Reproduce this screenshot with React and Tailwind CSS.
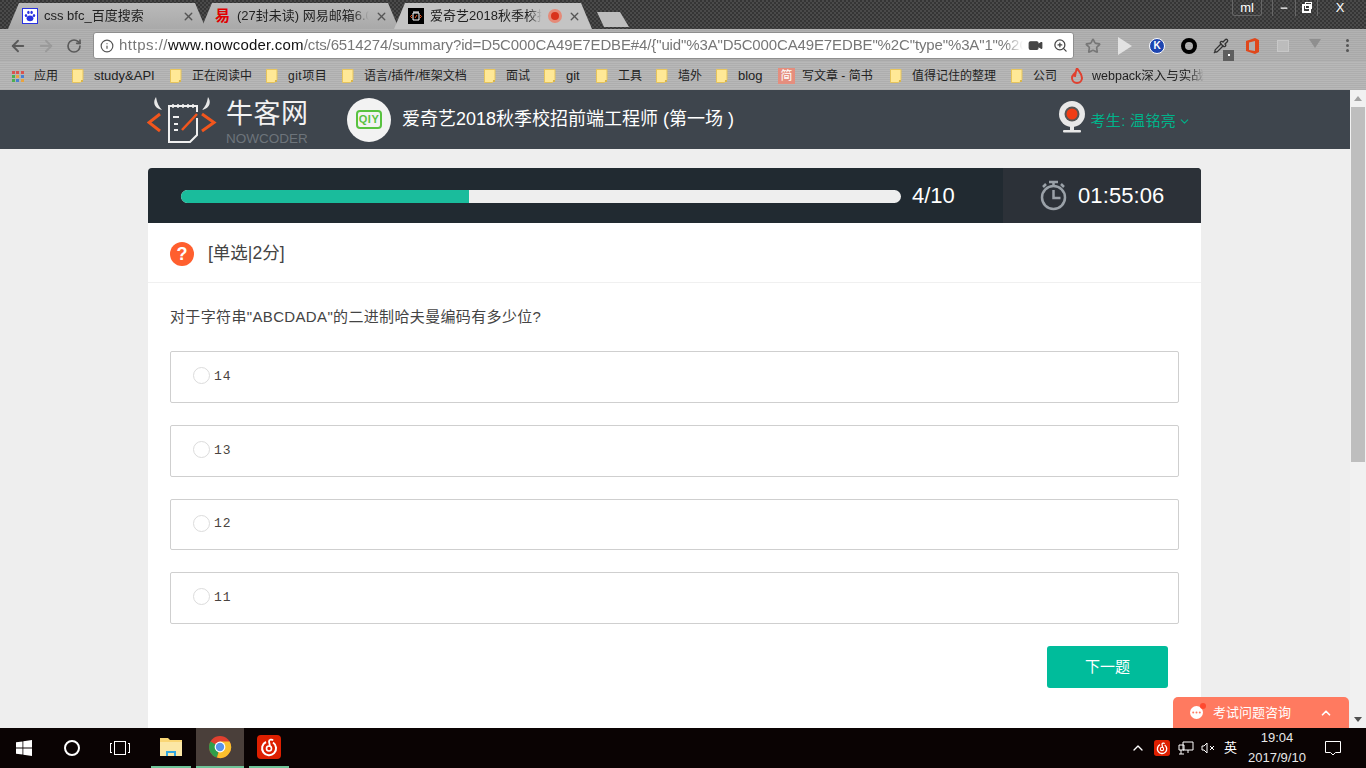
import React from "react";
import { ArrowLeft, ArrowRight, RotateCw, Info, Star, Video, ZoomIn, X, ChevronDown, ChevronUp, Pipette, Minus } from "lucide-react";

const FONT = "font-['Liberation_Sans','Noto_Sans_CJK_SC',sans-serif]";

function Folder() {
  return (
    <svg width="12" height="14" viewBox="0 0 12 14" className="shrink-0">
      <path d="M.5.5h10.500v10l-2.500 3H.5z" fill="#ffe896" stroke="#e6c45c" />
      <path d="M9 11h2v2H9z" fill="#d9b64a" />
    </svg>
  );
}

function AppsIcon() {
  const c = ["#d9534f", "#d9534f", "#d9534f", "#4caf50", "#e8a33d", "#4a7fd0", "#4caf50", "#4a7fd0", "#e8a33d"];
  return (
    <div className="grid grid-cols-3 gap-[1px] w-[12px] shrink-0">
      {c.map((k, i) => (
        <svg key={i} width="3" height="3" className="block"><rect width="3" height="3" fill={k} /></svg>
      ))}
    </div>
  );
}

function Bookmark({ icon, label, w }) {
  return (
    <div className="flex items-center gap-[10px] shrink-0">
      {icon || <Folder />}
      <span className={"text-[#222] whitespace-nowrap " + w}>{label}</span>
    </div>
  );
}

function Tab({ icon, title, active, extra }) {
  return (
    <div
      className={
        "relative -mr-[5px] h-[26px] w-[198px] shrink-0 flex items-center pl-[14px] pr-[11px] gap-[6px] [clip-path:polygon(0_100%,11px_0,calc(100%-11px)_0,100%_100%)] " +
        (active ? "bg-[#c4c4c4]" : "bg-[linear-gradient(180deg,#bababa,#a9a9a9)]")
      }
    >
      <div className="w-[16px] h-[16px] shrink-0">{icon}</div>
      <span className="flex-1 min-w-0 overflow-hidden whitespace-nowrap text-[13px] text-[#222] [mask-image:linear-gradient(90deg,#000_88%,transparent)]">{title}</span>
      {extra}
      <X size={13} strokeWidth={2.5} className="text-[#555] shrink-0" />
    </div>
  );
}

function Logo() {
  return (
    <svg width="70" height="48" viewBox="0 0 70 48" className="shrink-0">
      <path d="M9 1c-3 4-3 11 6 13-3-3-5-7-6-13z" fill="#e8e8e8" />
      <path d="M61 1c3 4 3 11-6 13 3-3 5-7 6-13z" fill="#e8e8e8" />
      <path d="M13 18 2 26.500 13 35" fill="none" stroke="#f2561d" strokeWidth="3" />
      <path d="M55 18l12 8.500L55 35" fill="none" stroke="#f2561d" strokeWidth="3" />
      <path d="M50 22v17l-7 7H22V10h28v6" fill="none" stroke="#f0f0f0" strokeWidth="2" />
      <path d="M26 8v4M31 8v4M36 8v4M41 8v4M46 8v4" stroke="#f0f0f0" strokeWidth="1.5" />
      <path d="M26 21h6M27 28h4M27 34h4" stroke="#f0f0f0" strokeWidth="2" />
      <path d="M35 34 50 18" stroke="#f2561d" strokeWidth="2.5" />
    </svg>
  );
}

function Option({ n, h }) {
  return (
    <div className={"border border-[#cfcfcf] rounded-[2px] flex items-center pl-[22px] pb-[3px] gap-[4px] " + h}>
      <span className="w-[17px] h-[17px] rounded-full border border-[#dcdcdc]" />
      <span className="font-['Liberation_Mono',monospace] text-[13px] tracking-[1px] text-[#4a4440] pt-[2px]">{n}</span>
    </div>
  );
}

function ChromeIcon() {
  return (
    <svg width="24" height="24" viewBox="0 0 24 24">
      <circle cx="12" cy="12" r="11" fill="#e0402f" />
      <path d="M12 12 2.500 6.500A11 11 0 0 0 9 22.600z" fill="#2f9e4a" />
      <path d="M12 12 9 22.600A11 11 0 0 0 21.600 6.500H12z" fill="#fbc02d" />
      <circle cx="12" cy="12" r="5.400" fill="#fff" />
      <circle cx="12" cy="12" r="4.200" fill="#5a93ea" />
    </svg>
  );
}

function NetEase({ size }) {
  return (
    <svg width={size} height={size} viewBox="0 0 24 24">
      <rect width="24" height="24" rx="4" fill="#dd1f00" />
      <path d="M9 7a7 7 0 1 0 7 .5" fill="none" stroke="#fff" strokeWidth="2" />
      <circle cx="12" cy="13.500" r="2.500" fill="none" stroke="#fff" strokeWidth="1.600" />
      <path d="M13 11.500 12 6.500c0-2 3-2.500 4-1" fill="none" stroke="#fff" strokeWidth="1.800" />
    </svg>
  );
}

export default function App() {
  return (
    <div className={"w-[1366px] h-[768px] overflow-hidden flex flex-col " + FONT}>
      {/* tab strip */}
      <div className="h-[29px] shrink-0 flex items-end pl-[8px] relative bg-[#3c3c3c] bg-[repeating-conic-gradient(#4a4a4a_0_25%,#353535_0_50%)] bg-[length:4px_4px]">
        <Tab
          title="css bfc_百度搜索"
          icon={
            <div className="w-[16px] h-[16px] border border-[#2932e1] bg-white flex items-center justify-center">
              <svg width="12" height="12" viewBox="0 0 12 12" fill="#2932e1">
                <ellipse cx="6" cy="8.300" rx="3.400" ry="2.900" />
                <ellipse cx="2" cy="5.500" rx="1.200" ry="1.600" />
                <ellipse cx="10" cy="5.500" rx="1.200" ry="1.600" />
                <ellipse cx="4.400" cy="2.400" rx="1.200" ry="1.600" />
                <ellipse cx="7.600" cy="2.400" rx="1.200" ry="1.600" />
              </svg>
            </div>
          }
        />
        <Tab
          title="(27封未读) 网易邮箱6.0版"
          icon={<span className="block text-[15px] leading-[16px] font-bold text-[#e00000]">易</span>}
        />
        <Tab
          active
          title="爱奇艺2018秋季校招前端工程师"
          icon={
            <div className="w-[16px] h-[16px] bg-black flex items-center justify-center">
              <svg width="12" height="12" viewBox="0 0 12 12" fill="none" stroke="#fff">
                <path d="M3 3h6v7H3zM4 1v2M6 1v2M8 1v2" />
                <path d="M5 8l2-3" stroke="#f2561d" />
                <path d="M2 5 .5 6.500 2 8M10 5l1.500 1.500L10 8" stroke="#f2561d" />
              </svg>
            </div>
          }
          extra={
            <span className="w-[14px] h-[14px] rounded-full border-[3px] border-[#e58a78] bg-[#d9321c] shrink-0" />
          }
        />
        <div className="ml-[10px] mb-[2px] w-[32px] h-[15px] bg-[#bdbdbd] [clip-path:polygon(0_0,72%_0,100%_100%,22%_100%)]" />
        <div className="absolute top-0 right-[4px] flex items-start text-white">
          <div className="w-[30px] h-[16px] mr-[10px] border border-t-0 border-[#666] rounded-b-[3px] text-[13px] leading-[15px] text-center">ml</div>
          <div className="w-[23px] h-[16px] border-l border-[#666] flex items-center justify-center"><Minus size={10} strokeWidth={3} /></div>
          <div className="w-[23px] h-[16px] border-x border-[#666] flex items-center justify-center">
            <div className="relative w-[9px] h-[9px] border-2 border-white">
              <span className="absolute -top-[4px] left-[1px] w-[7px] h-[7px] border border-white" />
            </div>
          </div>
          <div className="w-[44px] h-[16px] text-[13px] leading-[15px] text-center">X</div>
        </div>
      </div>

      {/* toolbar */}
      <div className="h-[33px] shrink-0 flex items-center pl-[8px] bg-[repeating-linear-gradient(180deg,#b2b2b2_0,#b2b2b2_1px,#a9a9a9_1px,#a9a9a9_2px)]">
        <ArrowLeft size={18} strokeWidth={2.5} className="text-[#5a5a5a] ml-[1px]" />
        <ArrowRight size={18} strokeWidth={2.5} className="text-[#9a9a9a] ml-[10px]" />
        <RotateCw size={16} strokeWidth={2.5} className="text-[#5a5a5a] ml-[11px]" />
        <div className="ml-[11px] w-[981px] h-[27px] bg-white rounded-[3px] border border-[#8e8e8e] flex items-center pl-[6px] pr-[5px]">
          <Info size={14} className="text-[#555] shrink-0" />
          <div className="ml-[5px] w-[904px] overflow-hidden whitespace-nowrap text-[15px] tracking-[-0.13px] text-[#777] [mask-image:linear-gradient(90deg,#000_98%,transparent)]">
            <span className="tracking-[0.5px]">https://</span><span className="tracking-[0.2px] text-[#111]">www.nowcoder.com</span>/cts/6514274/summary?id=D5C000CA49E7EDBE#4/{'{"uid"%3A"D5C000CA49E7EDBE"%2C"type"%3A"1"%2C"'}
          </div>
          <Video size={15} fill="#444" className="text-[#444] ml-[5px] shrink-0" />
          <ZoomIn size={15} className="text-[#444] ml-[10px] shrink-0" />
        </div>
        <Star size={16} strokeWidth={2.5} className="text-[#777] ml-[11px]" />
        <svg width="16" height="18" viewBox="0 0 16 18" className="ml-[16px]"><path d="M1 0v18l14-9z" fill="#e2e2e2" /></svg>
        <span className="ml-[16px] w-[16px] h-[16px] rounded-full bg-[#1d45b0] border border-white text-white text-[10px] font-bold leading-[14px] text-center">K</span>
        <span className="ml-[16px] w-[16px] h-[16px] rounded-full border-[4px] border-black" />
        <div className="relative ml-[16px] w-[16px] h-[16px]">
          <Pipette size={16} className="text-[#333]" />
          <span className="absolute left-[10px] top-[12px] w-[11px] h-[11px] bg-[#5e5e5e] flex items-center justify-center">
            <span className="w-[2px] h-[2px] bg-white" />
          </span>
        </div>
        <svg width="16" height="18" viewBox="0 0 16 18" className="ml-[16px]">
          <path d="M1 4 10 1l4 2v12l-4 2-9-3z" fill="#e0471b" />
          <path d="M4 5.500 10 4v10l-6-1z" fill="#b0b0b0" />
        </svg>
        <div className="ml-[16px] w-[12px] h-[12px] bg-[#bcbcbc] border border-[#c8c8c8]" />
        <svg width="12" height="9" viewBox="0 0 12 9" className="ml-[20px] mb-[4px]"><path d="M0 0h12L6 9z" fill="#8f8f8f" /></svg>
        <div className="ml-[25px] flex flex-col gap-[2px]">
          <span className="w-[3px] h-[3px] rounded-full bg-[#555]" />
          <span className="w-[3px] h-[3px] rounded-full bg-[#555]" />
          <span className="w-[3px] h-[3px] rounded-full bg-[#555]" />
        </div>
      </div>

      {/* bookmarks */}
      <div className="h-[28px] shrink-0 flex items-center pl-[12px] gap-[14px] text-[12px] bg-[repeating-linear-gradient(180deg,#b8b8b8_0,#b8b8b8_1px,#aeaeae_1px,#aeaeae_2px)]">
        <Bookmark icon={<AppsIcon />} label="应用" w="w-[24px]" />
        <Bookmark label="study&API" w="w-[62px] text-[13px]" />
        <Bookmark label="正在阅读中" w="w-[60px]" />
        <Bookmark label="git项目" w="w-[40px] tracking-[0.5px]" />
        <Bookmark label="语言/插件/框架文档" w="w-[106px]" />
        <Bookmark label="面试" w="w-[24px]" />
        <Bookmark label="git" w="w-[16px] text-[13px]" />
        <Bookmark label="工具" w="w-[24px]" />
        <Bookmark label="墙外" w="w-[24px]" />
        <Bookmark label="blog" w="w-[26px] text-[13px]" />
        <div className="flex items-center gap-[7px] shrink-0">
          <span className="w-[17px] h-[16px] bg-[#e58e7e] text-white text-[12px] leading-[16px] text-center">简</span>
          <span className="text-[#222] w-[74px] whitespace-nowrap">写文章 - 简书</span>
        </div>
        <Bookmark label="值得记住的整理" w="w-[85px]" />
        <Bookmark label="公司" w="w-[24px]" />
        <div className="flex items-center gap-[9px] shrink-0">
          <svg width="12" height="16" viewBox="0 0 12 16"><path d="M6 0c1 3 5 5 5 10a5 5 0 0 1-10 0c0-2 1-3 2-4 0 1 .5 2 1 2 .5-3 1-5 2-8z" fill="none" stroke="#e0402f" strokeWidth="2" /></svg>
          <span className="text-[#222] text-[12.5px] w-[112px] overflow-hidden whitespace-nowrap [mask-image:linear-gradient(90deg,#000_88%,transparent)]">webpack深入与实战</span>
        </div>
      </div>

      {/* viewport */}
      <div className="flex-1 min-h-0 flex relative">
        <div className="flex-1 min-w-0 flex flex-col bg-[#eeeeee]">
          <div className="h-[59px] shrink-0 bg-[#3e454d] flex items-center pl-[147px] pr-[159px]">
            <Logo />
            <div className="ml-[9px] w-[83px] pt-[7px] flex flex-col items-start">
              <span className="text-[#f2f2f2] text-[27px] leading-[29px] tracking-[0.5px] whitespace-nowrap">牛客网</span>
              <span className="mt-[3px] text-[#6d747b] text-[13.5px] leading-[14px] whitespace-nowrap">NOWCODER</span>
            </div>
            <div className="ml-[38px] w-[44px] h-[44px] rounded-full bg-[#f2f2f2] flex items-center justify-center">
              <span className="border-[2px] border-[#58c23f] rounded-[4px] px-[1px] text-[#58c23f] text-[11px] leading-[15px] font-bold tracking-[0.5px]">QIY</span>
            </div>
            <div className="ml-[11px] text-white text-[18px] whitespace-nowrap">爱奇艺2018秋季校招前端工程师 (第一场 )</div>
            <div className="ml-auto flex items-center text-[#00b38a] text-[15px]">
              <svg width="28" height="32" viewBox="0 0 28 32" className="mr-[5px] mb-[5px]">
                <circle cx="14" cy="13" r="13" fill="#e8e8e8" />
                <circle cx="14" cy="13" r="7.500" fill="#555" />
                <circle cx="14" cy="13" r="5.500" fill="#f03c14" />
                <rect x="12" y="25" width="4" height="4" fill="#e8e8e8" />
                <rect x="5" y="29" width="18" height="2.500" rx="1" fill="#e8e8e8" />
              </svg>
              <span className="pt-[4px] whitespace-nowrap tracking-[0.3px]">考生: 温铭亮</span>
              <ChevronDown size={13} className="ml-[2px] mt-[4px]" />
            </div>
          </div>

          <div className="flex-1 min-h-0 overflow-hidden pt-[19px] pl-[148px] pr-[149px]">
            <div className="h-[55px] rounded-t-[4px] overflow-hidden bg-[#212a31] flex items-center text-white">
              <div className="flex-1 flex items-center pl-[33px]">
                <div className="w-[720px] h-[13px] mt-[1px] rounded-full bg-[#eeeeee] overflow-hidden">
                  <div className="w-[288px] h-full bg-[#1abc9c]" />
                </div>
                <span className="ml-[11px] text-[22px]">4/10</span>
              </div>
              <div className="w-[198px] h-full bg-[#2c3138] flex items-center pl-[37px]">
                <svg width="27" height="31" viewBox="0 0 27 31" fill="none" stroke="#9aa1a8" strokeWidth="2.500">
                  <circle cx="13.500" cy="17.500" r="11.500" />
                  <path d="M13.500 10v8h7" />
                  <path d="M9 2h9M13.500 2v4M3 7l3-3M24 7l-3-3" />
                </svg>
                <span className="ml-[11px] text-[22px] tracking-[0.1px]">01:55:06</span>
              </div>
            </div>
            <div className="bg-white h-[600px]">
              <div className="h-[60px] border-b border-[#f0f0f0] flex items-center pl-[22px] pt-[2px]">
                <span className="w-[24px] h-[24px] rounded-full bg-[#ff5f2e] text-white text-[18px] font-bold leading-[24px] text-center">?</span>
                <span className="ml-[14px] text-[17.5px] text-[#444]">[单选|2分]</span>
              </div>
              <div className="px-[22px]">
                <p className="mt-[24px] text-[15px] tracking-[0.35px] leading-[20px] text-[#444]">对于字符串"ABCDADA"的二进制哈夫曼编码有多少位?</p>
                <div className="mt-[24px] flex flex-col gap-[22px]">
                  <Option n="14" h="h-[52px]" />
                  <Option n="13" h="h-[52px]" />
                  <Option n="12" h="h-[51px]" />
                  <Option n="11" h="h-[52px]" />
                </div>
                <div className="mt-[22px] flex justify-end pr-[11px]">
                  <div className="w-[121px] h-[42px] rounded-[3px] bg-[#00bc9b] text-white text-[15px] leading-[42px] text-center">下一题</div>
                </div>
              </div>
            </div>
          </div>
        </div>

        {/* scrollbar */}
        <div className="w-[16px] shrink-0 bg-[#f1f1f1] flex flex-col items-center">
          <svg width="8" height="5" viewBox="0 0 8 5" className="mt-[6px]"><path d="M0 5h8L4 0z" fill="#a3a3a3" /></svg>
          <div className="mt-[6px] w-[14px] h-[355px] bg-[#bebebe]" />
          <svg width="8" height="5" viewBox="0 0 8 5" className="mt-auto mb-[6px]"><path d="M0 0h8L4 5z" fill="#505050" /></svg>
        </div>

        {/* chat float */}
        <div className="absolute right-[17px] bottom-0 w-[176px] h-[31px] bg-[#ff7a60] rounded-t-[5px] flex items-center pl-[17px] pr-[16px] text-white">
          <span className="relative w-[13px] h-[13px] rounded-full bg-white flex items-center justify-center">
            <svg width="9" height="3" viewBox="0 0 9 3" fill="#ff7a60"><circle cx="1.200" cy="1.500" r="1" /><circle cx="4.500" cy="1.500" r="1" /><circle cx="7.800" cy="1.500" r="1" /></svg>
            <span className="absolute -top-[3px] -right-[3px] w-[6px] h-[6px] rounded-full bg-[#ff4a30]" />
          </span>
          <span className="ml-[10px] text-[13px] whitespace-nowrap">考试问题咨询</span>
          <ChevronUp size={14} strokeWidth={3} className="ml-auto" />
        </div>
      </div>

      {/* taskbar */}
      <div className="h-[40px] shrink-0 bg-[#0a0303] flex items-stretch text-white">
        <div className="w-[151px] flex items-center pl-[16px]">
          <svg width="16" height="16" viewBox="0 0 16 16" fill="#fff"><path d="M0 2.300 6.500 1.400v6.200H0zM7.300 1.300 16 0v7.600H7.300zM0 8.400h6.500v6.200L0 13.700zM7.300 8.400H16V16l-8.700-1.300z" /></svg>
          <span className="ml-[32px] w-[16px] h-[16px] rounded-full border-[2px] border-white" />
          <span className="ml-[30px] flex items-center gap-[2px]">
            <span className="w-[2px] h-[10px] border-l border-y border-white" />
            <span className="w-[12px] h-[14px] border border-white" />
            <span className="w-[2px] h-[10px] border-r border-y border-white" />
          </span>
        </div>
        <div className="w-[40px] flex items-center justify-center border-b-2 border-[#6fc498]">
          <svg width="22" height="20" viewBox="0 0 22 20">
            <path d="M0 1h8l2 2h12v16H0z" fill="#f9d675" />
            <path d="M0 5h22v14H0z" fill="#fbe7a5" />
            <path d="M6 14h10v5h-2v-3H8v3H6z" fill="#32a6e0" />
          </svg>
        </div>
        <div className="ml-[5px] w-[48px] bg-[#4a3f3a] flex items-center justify-center border-b-2 border-[#6fc498]"><ChromeIcon /></div>
        <div className="ml-[5px] w-[40px] flex items-center justify-center border-b-2 border-[#6fc498]"><NetEase size={24} /></div>

        <div className="ml-auto flex items-center pr-[25px]">
          <ChevronUp size={16} className="mr-[8px]" />
          <NetEase size={16} />
          <svg width="16" height="14" viewBox="0 0 16 14" fill="none" stroke="#fff" className="ml-[8px]"><path d="M5 1h10v8H5zM1 4h5v5H1zM3 9v4M1 13h5M10 9v3" /></svg>
          <svg width="14" height="12" viewBox="0 0 14 12" fill="none" stroke="#fff" className="ml-[7px]"><path d="M1 4v4h2l3 3V1L3 4zM9 4l4 4M13 4l-4 4" /></svg>
          <span className="ml-[9px] text-[13px]">英</span>
          <div className="ml-[9px] w-[62px] flex flex-col items-center text-[13px] leading-[20px] text-[#e8e8e8]">
            <span>19:04</span>
            <span>2017/9/10</span>
          </div>
          <svg width="16" height="16" viewBox="0 0 16 16" fill="none" stroke="#fff" className="ml-[17px]"><path d="M.5 1.500h15v11h-5l-2.500 2.500L5.500 12.500h-5z" /></svg>
        </div>
      </div>
    </div>
  );
}
